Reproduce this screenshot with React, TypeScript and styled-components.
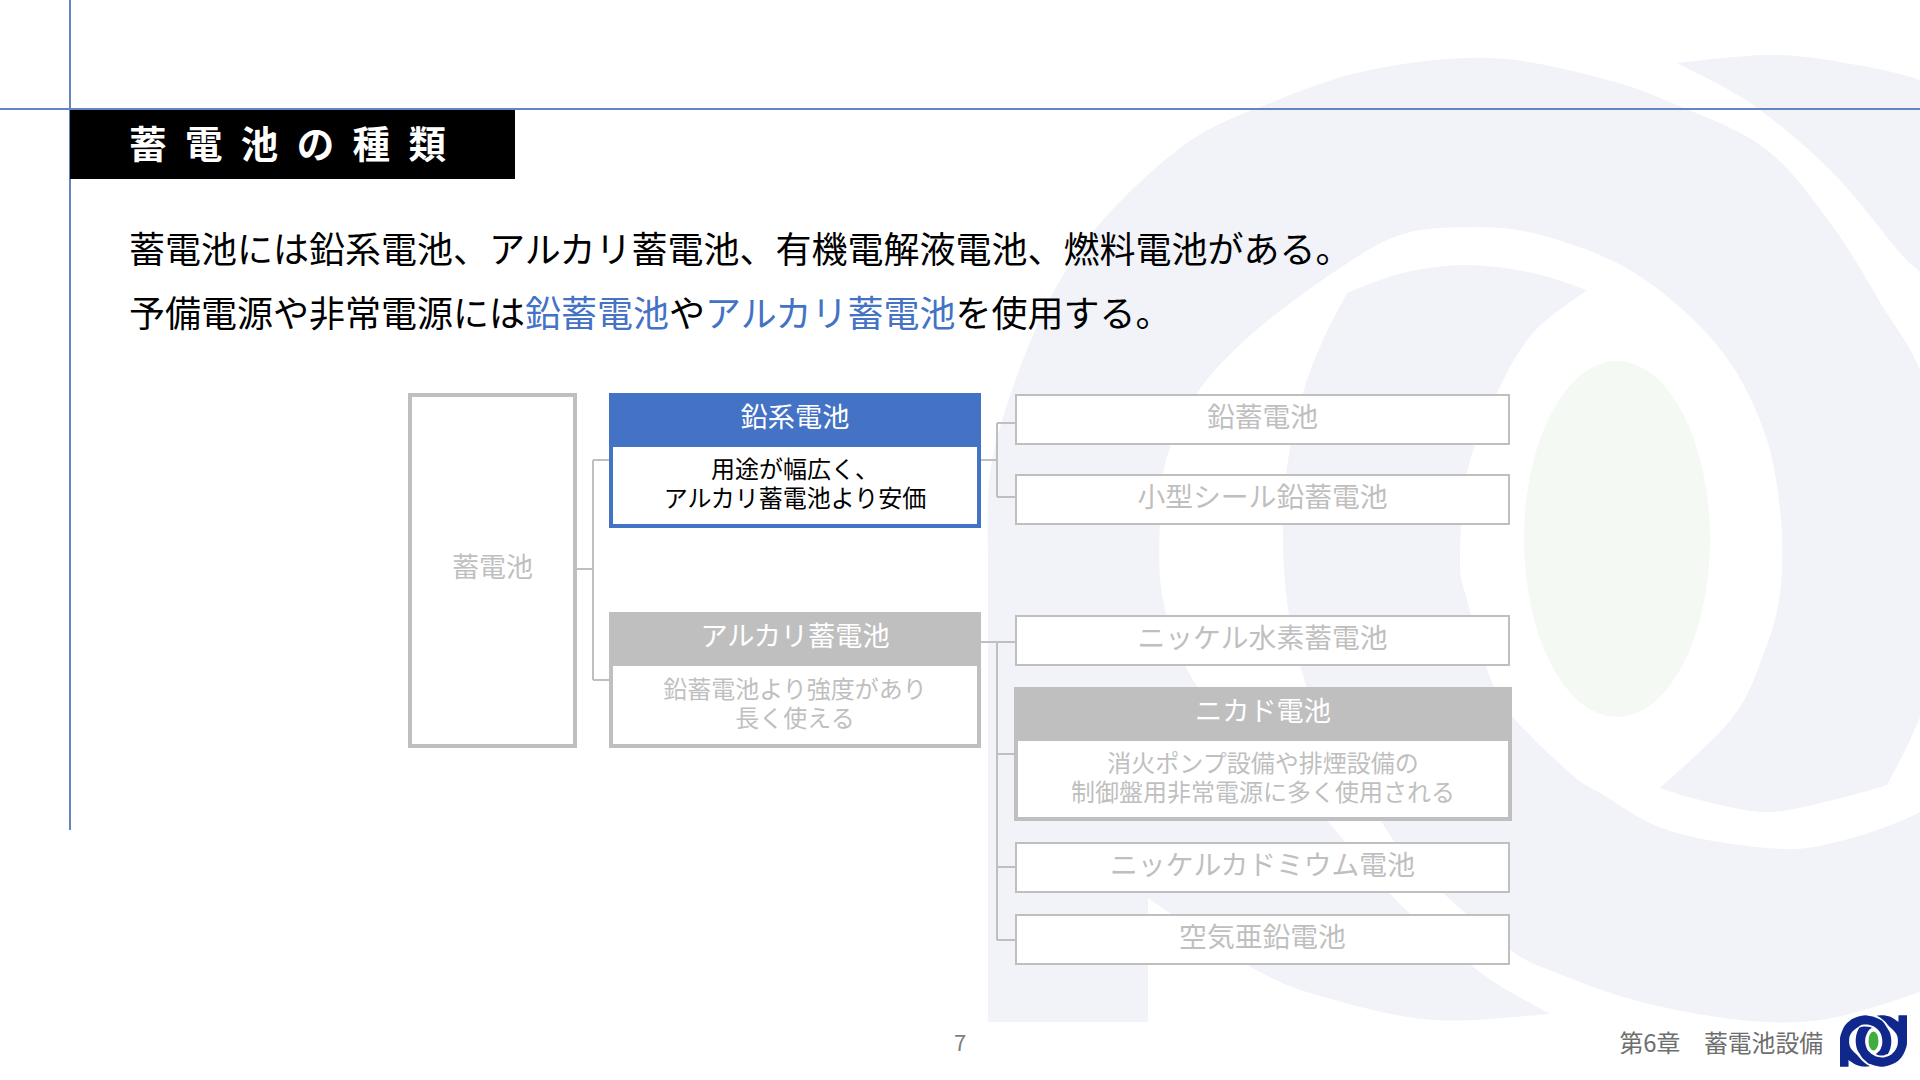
import styled, { createGlobalStyle } from "styled-components";

const GRAY = "#bfbfbf";
const BLUE = "#4472c4";

type Pt = [number, number];

// catmull-rom through the points, so the logo outline can be listed as measured points
const curve = (pts: Pt[]) => {
  let d = "";
  for (let i = 0; i < pts.length - 1; i++) {
    const p0 = pts[i - 1] ?? pts[i];
    const p1 = pts[i];
    const p2 = pts[i + 1];
    const p3 = pts[i + 2] ?? p2;
    const c1 = [p1[0] + (p2[0] - p0[0]) / 6, p1[1] + (p2[1] - p0[1]) / 6];
    const c2 = [p2[0] - (p3[0] - p1[0]) / 6, p2[1] - (p3[1] - p1[1]) / 6];
    d += ` C${c1[0]} ${c1[1]} ${c2[0]} ${c2[1]} ${p2[0]} ${p2[1]}`;
  }
  return d;
};

const LEFT_SHAPE =
  "M988 1022 L988 560" +
  curve([[988, 560], [990, 473], [1013, 387], [1053, 293], [1103, 220], [1187, 143], [1270, 103], [1370, 70], [1490, 58], [1600, 78], [1677, 105], [1767, 150], [1833, 227], [1883, 307], [1920, 370], [1944, 458], [1951, 538], [1947, 611], [1931, 685], [1911, 738], [1887, 785]]) +
  curve([[1887, 785], [1833, 800], [1767, 812], [1700, 800], [1660, 788]]) +
  curve([[1660, 788], [1733, 717], [1765, 650], [1780, 593], [1781, 520], [1767, 440], [1733, 367], [1683, 310], [1617, 263], [1533, 233], [1467, 227], [1400, 235], [1337, 270], [1253, 333], [1197, 393], [1167, 457], [1160, 520], [1163, 600], [1193, 680], [1250, 745], [1314, 806], [1401, 905], [1481, 973], [1550, 1014]]) +
  curve([[1550, 1014], [1433, 1020], [1324, 997], [1251, 967], [1148, 898]]) +
  " L1148 1022 Z";

const RIGHT_SHAPE =
  "M1677 63" +
  curve([[1677, 63], [1767, 55], [1840, 62], [1920, 80], [1983, 111], [2086, 178]]) +
  " L2086 56 L2246 56 L2246 540" +
  curve([[2246, 540], [2244, 605], [2221, 691], [2181, 785], [2131, 858], [2047, 935], [1964, 975], [1864, 1010], [1800, 1022], [1724, 1018], [1634, 1000], [1557, 973], [1510, 950], [1443, 893], [1401, 851], [1351, 771], [1314, 708], [1290, 620], [1283, 540], [1287, 467], [1303, 393], [1323, 340], [1347, 293]]) +
  curve([[1347, 293], [1403, 273], [1467, 265], [1533, 273], [1587, 290]]) +
  curve([[1587, 290], [1533, 333], [1497, 393], [1467, 473], [1460, 560], [1467, 600], [1490, 677], [1513, 717], [1570, 773], [1600, 793], [1667, 830], [1767, 848], [1833, 843], [1920, 812], [1981, 765], [2037, 695], [2067, 621], [2074, 558], [2071, 478], [2041, 398], [1984, 333], [1920, 272], [1900, 253], [1833, 173], [1753, 105], [1677, 63]]) +
  " Z";

const GlobalStyle = createGlobalStyle`
  html, body {
    margin: 0;
    padding: 0;
    background: #ffffff;
  }
  body {
    font-family: "Noto Sans CJK JP", "Noto Sans", sans-serif;
  }
`;

const Slide = styled.div`
  position: relative;
  display: flex;
  flex-direction: column;
  width: 1920px;
  height: 1080px;
  padding-top: 110px;
  box-sizing: border-box;
  overflow: hidden;
  background: #ffffff;
`;

const Watermark = styled.svg`
  position: absolute;
  left: 0;
  top: 0;
  width: 1920px;
  height: 1080px;
`;

const HorizontalRule = styled.div`
  position: absolute;
  left: 0;
  top: 108px;
  width: 100%;
  height: 2px;
  background: #6484c2;
`;

const VerticalRule = styled.div`
  position: absolute;
  left: 69px;
  top: 0;
  width: 2px;
  height: 830px;
  background: #6484c2;
`;

const TitleBar = styled.h1`
  position: relative;
  display: flex;
  align-items: center;
  width: 445px;
  height: 69px;
  margin: 0 0 0 70px;
  padding: 0 0 5px 59px;
  box-sizing: border-box;
  background: #000000;
  color: #ffffff;
  font-size: 37.5px;
  font-weight: 700;
  letter-spacing: 18.4px;
  line-height: 64px;
`;

const Lead = styled.div`
  position: relative;
  margin: 36px 0 0 129px;
  color: #000000;
  font-size: 36px;
  line-height: 64px;
`;

const Accent = styled.span`
  color: ${BLUE};
`;

const Diagram = styled.div`
  position: relative;
  display: flex;
  align-items: flex-start;
  margin: 50px 0 0 408px;
`;

const Connectors = styled.svg`
  position: absolute;
  left: 0;
  top: 0;
  width: 1110px;
  height: 580px;
  overflow: visible;
`;

const RootBox = styled.div`
  position: relative;
  display: flex;
  align-items: center;
  justify-content: center;
  width: 169px;
  height: 355px;
  padding-bottom: 10px;
  box-sizing: border-box;
  border: 4px solid ${GRAY};
  background: #ffffff;
  color: ${GRAY};
  font-size: 27px;
`;

const TypeColumn = styled.div`
  position: relative;
  display: flex;
  flex-direction: column;
  justify-content: space-between;
  width: 372px;
  height: 355px;
  margin-left: 32px;
`;

const Card = styled.div<{ $tone: string; $muted?: boolean; $height: number }>`
  display: flex;
  flex-direction: column;
  height: ${(p) => p.$height}px;
  box-sizing: border-box;
  border: 4px solid ${(p) => p.$tone};
  border-top: 0;
  color: ${(p) => (p.$muted ? GRAY : "#000000")};
  background: #ffffff;
`;

const CardHead = styled.div<{ $tone: string }>`
  display: flex;
  align-items: center;
  justify-content: center;
  flex: 0 0 54px;
  margin: 0 -4px;
  padding-bottom: 10px;
  box-sizing: border-box;
  background: ${(p) => p.$tone};
  color: #ffffff;
  font-size: 27.2px;
`;

const CardBody = styled.div`
  flex: 1;
  padding-bottom: 7px;
  text-align: center;
  font-size: 24px;
  line-height: 29px;
  display: flex;
  flex-direction: column;
  justify-content: center;
`;

const DetailColumn = styled.div`
  position: relative;
  display: flex;
  flex-direction: column;
  gap: 90px;
  width: 498px;
  margin-left: 33px;
  padding-top: 1px;
`;

const DetailGroup = styled.div<{ $gap: number }>`
  display: flex;
  flex-direction: column;
  gap: ${(p) => p.$gap}px;
`;

const DetailBox = styled.div`
  display: flex;
  align-items: center;
  justify-content: center;
  width: 495px;
  height: 51px;
  margin-left: 1px;
  padding-bottom: 9px;
  box-sizing: border-box;
  border: 2px solid ${GRAY};
  background: #ffffff;
  color: ${GRAY};
  font-size: 27.8px;
`;

const Footer = styled.footer`
  position: relative;
  display: grid;
  grid-template-columns: 1fr auto 1fr;
  align-items: center;
  margin-top: auto;
  margin-bottom: 13px;
  height: 52px;
`;

const PageNumber = styled.div`
  grid-column: 2;
  color: #7f7f7f;
  font-size: 22px;
`;

const Chapter = styled.div`
  grid-column: 3;
  display: flex;
  align-items: center;
  justify-content: flex-end;
  gap: 17px;
  padding-right: 13px;
  color: #6e6e6e;
  font-size: 23.8px;
`;

const LogoMark = styled.svg`
  width: 67px;
  height: 52px;
`;

const App = () => {
  return (
    <>
      <GlobalStyle />
      <Slide>
        <Watermark viewBox="0 0 1920 1080">
          <path d={LEFT_SHAPE} fill="#f1f3f9" />
          <path d={RIGHT_SHAPE} fill="#f1f3f9" />
          <ellipse cx="1617" cy="539" rx="93" ry="178" fill="#f4f9f4" />
        </Watermark>
        <HorizontalRule />
        <VerticalRule />

        <TitleBar>蓄電池の種類</TitleBar>

        <Lead>
          <div>蓄電池には鉛系電池、アルカリ蓄電池、有機電解液電池、燃料電池がある。</div>
          <div>
            予備電源や非常電源には<Accent>鉛蓄電池</Accent>や<Accent>アルカリ蓄電池</Accent>を使用する。
          </div>
        </Lead>

        <Diagram>
          <Connectors viewBox="0 0 1110 580">
            <g fill="none" stroke={GRAY} strokeWidth="2">
              <path d="M169 176 H185 M185 67 V287 M185 67 H201 M185 287 H201" />
              <path d="M573 67 H589 M589 30 V104 M589 30 H607 M589 104 H607" />
              <path d="M573 249 H607 M589 249 V547 M589 361 H607 M589 474 H607 M589 547 H607" />
            </g>
          </Connectors>

          <RootBox>蓄電池</RootBox>

          <TypeColumn>
            <Card $tone={BLUE} $height={135}>
              <CardHead $tone={BLUE}>鉛系電池</CardHead>
              <CardBody>
                <div>用途が幅広く、</div>
                <div>アルカリ蓄電池より安価</div>
              </CardBody>
            </Card>
            <Card $tone={GRAY} $muted $height={136}>
              <CardHead $tone={GRAY}>アルカリ蓄電池</CardHead>
              <CardBody>
                <div>鉛蓄電池より強度があり</div>
                <div>長く使える</div>
              </CardBody>
            </Card>
          </TypeColumn>

          <DetailColumn>
            <DetailGroup $gap={29}>
              <DetailBox>鉛蓄電池</DetailBox>
              <DetailBox>小型シール鉛蓄電池</DetailBox>
            </DetailGroup>
            <DetailGroup $gap={21}>
              <DetailBox>ニッケル水素蓄電池</DetailBox>
              <Card $tone={GRAY} $muted $height={134}>
                <CardHead $tone={GRAY}>ニカド電池</CardHead>
                <CardBody>
                  <div>消火ポンプ設備や排煙設備の</div>
                  <div>制御盤用非常電源に多く使用される</div>
                </CardBody>
              </Card>
              <DetailBox>ニッケルカドミウム電池</DetailBox>
              <DetailBox>空気亜鉛電池</DetailBox>
            </DetailGroup>
          </DetailColumn>
        </Diagram>

        <Footer>
          <PageNumber>7</PageNumber>
          <Chapter>
            <span>第6章　蓄電池設備</span>
            <LogoMark viewBox="988 56 1258 966">
              <path d={LEFT_SHAPE} fill="#10288c" />
              <path d={RIGHT_SHAPE} fill="#10288c" />
              <ellipse cx="1617" cy="539" rx="93" ry="178" fill="#3fae3f" />
            </LogoMark>
          </Chapter>
        </Footer>
      </Slide>
    </>
  );
};

export default App;
